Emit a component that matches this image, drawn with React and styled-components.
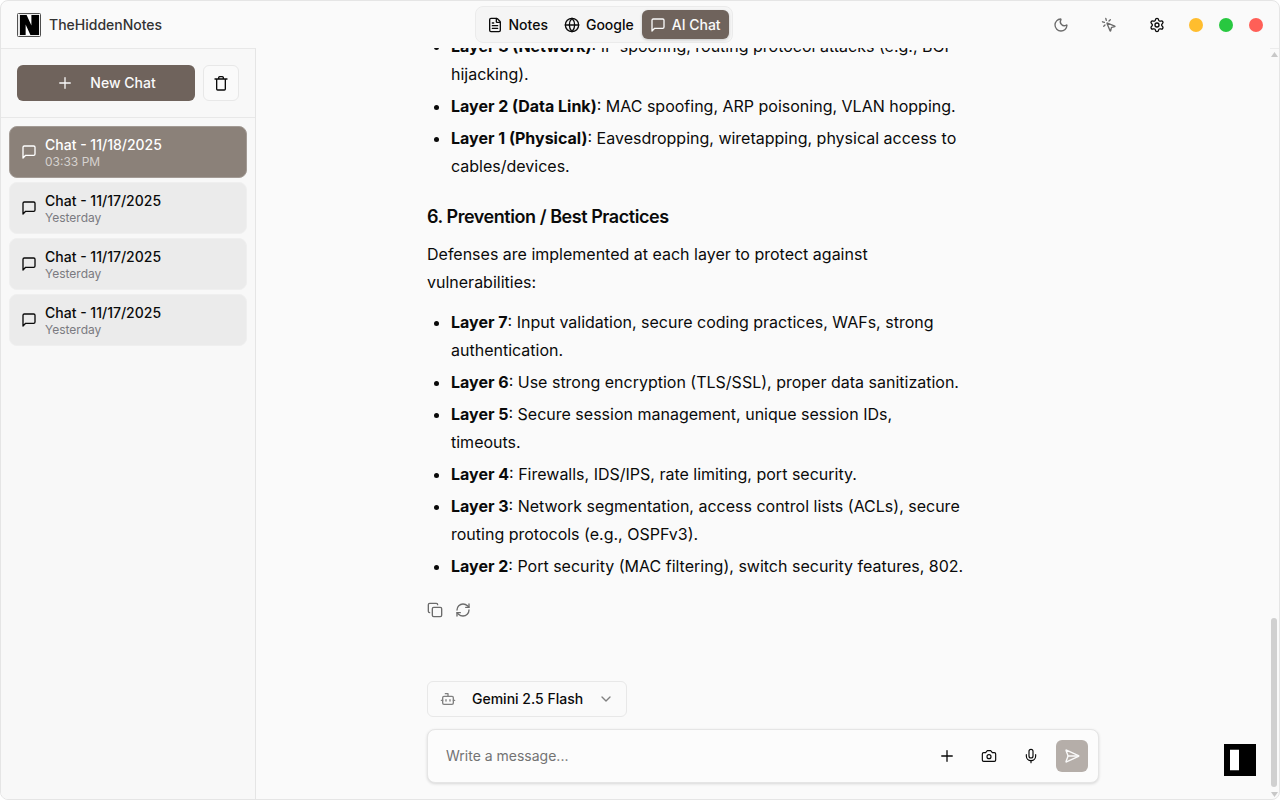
import React, { useState } from "react";
import styled, { createGlobalStyle } from "styled-components";
import {
  Bot,
  ChevronDown,
  Copy,
  FileText,
  Globe,
  Mic,
  Moon,
  MousePointerClick,
  Plus,
  RefreshCw,
  SendHorizontal,
  Settings
} from "lucide-react";

const GlobalStyle = createGlobalStyle`
  * {
    box-sizing: border-box;
  }
  body {
    margin: 0;
    background: #fff;
    color: #0a0a0a;
    font-family: Inter, "Liberation Sans", sans-serif;
    font-size: 14px;
    line-height: 20px;
  }
  button,
  input,
  select {
    font: inherit;
    color: inherit;
  }
  button {
    cursor: pointer;
  }
`;

const Window = styled.div`
  display: flex;
  flex-direction: column;
  height: 100vh;
  overflow: hidden;
  background: #fafafa;
  border: 1px solid #e5e5e5;
  border-radius: 8px;
`;

const Header = styled.header`
  display: flex;
  flex: none;
  align-items: center;
  justify-content: space-between;
  height: 47px;
  padding: 0 16px;
`;

const Brand = styled.div`
  display: flex;
  align-items: center;
  gap: 8px;
  color: #333;
  font-weight: 500;
`;

const Tabs = styled.nav`
  display: flex;
  padding: 3px;
  background: #f5f5f5;
  border: 1px solid #ebebeb;
  border-radius: 8px;
`;

const Tab = styled.button`
  display: flex;
  align-items: center;
  gap: 6px;
  height: 29px;
  padding: 0 8px;
  border: 0;
  border-radius: 6px;
  font-weight: 500;
  color: ${p => (p.$active ? "#fafafa" : "#0a0a0a")};
  background: ${p => (p.$active ? "#6f635c" : "transparent")};
  box-shadow: ${p => (p.$active ? "0 1px 3px rgba(0, 0, 0, 0.2)" : "none")};
`;

const HeaderActions = styled.div`
  display: flex;
  align-items: center;
  gap: 16px;
`;

const IconButton = styled.button`
  display: grid;
  place-items: center;
  width: ${p => p.$size}px;
  height: ${p => p.$size}px;
  padding: 0;
  border: 0;
  background: transparent;
  color: ${p => (p.$muted ? "#6b6b6b" : "#0a0a0a")};
`;

const Dot = styled.button`
  width: 14px;
  height: 14px;
  padding: 0;
  border: 0;
  border-radius: 50%;
  background: ${p => p.$color};
`;

const Body = styled.div`
  display: flex;
  flex: 1;
  min-height: 0;
`;

const Sidebar = styled.aside`
  flex: none;
  width: 255px;
  background: #f8f8f8;
  border-top: 1px solid #e8e8e8;
  border-right: 1px solid #e5e5e5;
`;

const SidebarTools = styled.div`
  display: flex;
  gap: 8px;
  padding: 16px;
  border-bottom: 1px solid #e8e8e8;
`;

const NewChat = styled.button`
  display: flex;
  flex: 1;
  align-items: center;
  justify-content: center;
  gap: 16px;
  height: 36px;
  border: 0;
  border-radius: 6px;
  background: #6f635c;
  color: #fafafa;
  font-weight: 500;
`;

const TrashButton = styled(IconButton)`
  background: #fafafa;
  border: 1px solid #e8e8e8;
  border-radius: 6px;
`;

const ChatList = styled.div`
  display: flex;
  flex-direction: column;
  gap: 4px;
  padding: 8px;
`;

const ChatItem = styled.button`
  display: flex;
  align-items: center;
  gap: 8px;
  height: 52px;
  padding: 0 11px;
  border: 1px solid ${p => (p.$active ? "#a39b95" : "#efefef")};
  border-radius: 8px;
  background: ${p => (p.$active ? "#8b8179" : "#ebebeb")};
  color: ${p => (p.$active ? "#fff" : "#0a0a0a")};
  text-align: left;
`;

const ChatTitle = styled.div`
  font-weight: 500;
  line-height: 19px;
`;

const ChatTime = styled.div`
  font-size: 12px;
  line-height: 16px;
  color: ${p => (p.$active ? "#d6d2cf" : "#7a7a80")};
`;

const Main = styled.main`
  display: flex;
  flex: 1;
  flex-direction: column;
  min-width: 0;
  padding-bottom: 16px;
`;

const Messages = styled.div`
  display: flex;
  flex: 1;
  flex-direction: column;
  justify-content: flex-end;
  width: 100%;
  max-width: 672px;
  min-height: 0;
  margin: 0 auto;
  overflow: hidden;
`;

const Message = styled.article`
  flex: none;
  width: 80%;
  font-size: 16px;
  line-height: 28px;

  h3 {
    margin: 23px 0 9px;
    font-size: 18px;
    font-weight: 600;
    letter-spacing: -0.025em;
  }
  p {
    margin: 0 0 12px;
  }
  ul {
    display: flex;
    flex-direction: column;
    gap: 4px;
    margin: 0;
    padding-left: 24px;
  }
  strong {
    font-weight: 700;
  }
`;

const MessageActions = styled.div`
  display: flex;
  flex: none;
  gap: 12px;
  padding: 22px 0 63px;
`;

const Composer = styled.form`
  display: flex;
  flex: none;
  flex-direction: column;
  align-items: flex-start;
  gap: 12px;
  width: 100%;
  max-width: 672px;
  margin: 0 auto;
`;

const ModelPicker = styled.label`
  position: relative;
  color: #808080;

  select {
    width: 200px;
    height: 36px;
    padding: 0 40px 0 44px;
    appearance: none;
    border: 1px solid #e8e8e8;
    border-radius: 6px;
    background: #fafafa;
    color: #0a0a0a;
    font-weight: 500;
  }
  svg {
    position: absolute;
    top: 10px;
    pointer-events: none;
  }
  svg:first-child {
    left: 13px;
  }
  svg:last-child {
    right: 13px;
  }
`;

const MessageBox = styled.div`
  display: flex;
  align-items: center;
  gap: 8px;
  width: 100%;
  height: 54px;
  padding: 0 10px 0 18px;
  border: 1px solid #e5e5e5;
  border-radius: 8px;
  background: #fcfcfc;
  box-shadow: 0 1px 3px rgba(0, 0, 0, 0.14);

  input {
    flex: 1;
    min-width: 0;
    padding: 0;
    border: 0;
    outline: 0;
    background: transparent;
  }
  input::placeholder {
    color: #737373;
    opacity: 1;
  }
`;

const SendButton = styled(IconButton)`
  border-radius: 6px;
  background: #b5aea9;
  color: #fafafa;
`;

const Scrollbar = styled.div`
  display: flex;
  flex: none;
  flex-direction: column;
  align-items: center;
  width: 9px;
  padding: 3px 1px 2px 0;
  border-top: 1px solid #ececec;
`;

const ScrollThumb = styled.div`
  width: 6px;
  height: 169px;
  margin: auto 0 5px;
  border-radius: 3px;
  background: #d0d0d0;
`;

const Badge = styled.svg`
  position: fixed;
  right: 24px;
  bottom: 24px;
`;

const chats = [
  { title: "Chat - 11/18/2025", time: "03:33 PM" },
  { title: "Chat - 11/17/2025", time: "Yesterday" },
  { title: "Chat - 11/17/2025", time: "Yesterday" },
  { title: "Chat - 11/17/2025", time: "Yesterday" }
];

const attacks = [
  ["Layer 3 (Network)", "IP spoofing, routing protocol attacks (e.g., BGP hijacking)."],
  ["Layer 2 (Data Link)", "MAC spoofing, ARP poisoning, VLAN hopping."],
  ["Layer 1 (Physical)", "Eavesdropping, wiretapping, physical access to cables/devices."]
];

const defenses = [
  ["Layer 7", "Input validation, secure coding practices, WAFs, strong authentication."],
  ["Layer 6", "Use strong encryption (TLS/SSL), proper data sanitization."],
  ["Layer 5", "Secure session management, unique session IDs, timeouts."],
  ["Layer 4", "Firewalls, IDS/IPS, rate limiting, port security."],
  ["Layer 3", "Network segmentation, access control lists (ACLs), secure routing protocols (e.g., OSPFv3)."],
  ["Layer 2", "Port security (MAC filtering), switch security features, 802."]
];

const LineIcon = ({ weight = 2, children }) => (
  <svg
    width="16"
    height="16"
    viewBox="0 0 24 24"
    fill="none"
    stroke="currentColor"
    strokeWidth={weight}
    strokeLinecap="round"
    strokeLinejoin="round"
  >
    {children}
  </svg>
);

const ChatIcon = () => (
  <LineIcon>
    <path d="M21 15a2 2 0 0 1-2 2H7l-4 4V5a2 2 0 0 1 2-2h14a2 2 0 0 1 2 2z" />
  </LineIcon>
);

const CameraIcon = () => (
  <LineIcon weight={1.75}>
    <path d="M14.5 4h-5L7 7H4a2 2 0 0 0-2 2v9a2 2 0 0 0 2 2h16a2 2 0 0 0 2-2V9a2 2 0 0 0-2-2h-3z" />
    <circle cx="12" cy="13" r="3" />
  </LineIcon>
);

const TrashIcon = () => (
  <LineIcon>
    <path d="M3 6h18M5.5 6v15a1.5 1.5 0 0 0 1.5 1.5h10a1.5 1.5 0 0 0 1.5-1.5V6M8.5 6V4a1.5 1.5 0 0 1 1.5-1.5h4a1.5 1.5 0 0 1 1.5 1.5v2" />
  </LineIcon>
);

const Logo = () => (
  <svg width="24" height="24" viewBox="0 0 25 25">
    <rect x="0.5" y="0.5" width="24" height="24" rx="1" fill="#fff" stroke="#444" />
    <rect x="2" y="2" width="21" height="21" fill="#000" />
    <path d="M10 2h5v11zM9 12l5 11H9z" fill="#fff" />
    <path d="M2 2h1v21H2z" fill="#fff" />
  </svg>
);

const LayerList = ({ items }) => (
  <ul>
    {items.map(([name, text]) => (
      <li key={name}>
        <strong>{name}</strong>: {text}
      </li>
    ))}
  </ul>
);

const App = () => {
  const [tab, setTab] = useState("AI Chat");
  const [selected, setSelected] = useState(0);
  const [message, setMessage] = useState("");

  const tabs = [
    { name: "Notes", icon: <FileText size={16} /> },
    { name: "Google", icon: <Globe size={16} /> },
    { name: "AI Chat", icon: <ChatIcon /> }
  ];

  return (
    <>
      <GlobalStyle />
      <Window>
        <Header>
          <Brand>
            <Logo />
            TheHiddenNotes
          </Brand>
          <Tabs>
            {tabs.map(({ name, icon }) => (
              <Tab key={name} $active={tab === name} onClick={() => setTab(name)}>
                {icon}
                {name}
              </Tab>
            ))}
          </Tabs>
          <HeaderActions>
            <IconButton $size={32} $muted aria-label="Dark mode">
              <Moon size={16} />
            </IconButton>
            <IconButton $size={32} $muted aria-label="Pointer">
              <MousePointerClick size={16} />
            </IconButton>
            <IconButton $size={32} aria-label="Settings">
              <Settings size={16} />
            </IconButton>
            <Dot $color="#ffbd2e" aria-label="Minimize" />
            <Dot $color="#28c840" aria-label="Maximize" />
            <Dot $color="#ff5f57" aria-label="Close" />
          </HeaderActions>
        </Header>
        <Body>
          <Sidebar>
            <SidebarTools>
              <NewChat>
                <Plus size={18} strokeWidth={1.75} />
                New Chat
              </NewChat>
              <TrashButton $size={36} aria-label="Delete chats">
                <TrashIcon />
              </TrashButton>
            </SidebarTools>
            <ChatList>
              {chats.map((chat, index) => (
                <ChatItem
                  key={index}
                  $active={selected === index}
                  onClick={() => setSelected(index)}
                >
                  <ChatIcon />
                  <div>
                    <ChatTitle>{chat.title}</ChatTitle>
                    <ChatTime $active={selected === index}>{chat.time}</ChatTime>
                  </div>
                </ChatItem>
              ))}
            </ChatList>
          </Sidebar>
          <Main>
            <Messages>
              <Message>
                <LayerList items={attacks} />
                <h3>6. Prevention / Best Practices</h3>
                <p>
                  Defenses are implemented at each layer to protect against
                  vulnerabilities:
                </p>
                <LayerList items={defenses} />
              </Message>
              <MessageActions>
                <IconButton $size={16} $muted aria-label="Copy">
                  <Copy size={16} />
                </IconButton>
                <IconButton $size={16} $muted aria-label="Regenerate">
                  <RefreshCw size={16} />
                </IconButton>
              </MessageActions>
            </Messages>
            <Composer onSubmit={e => e.preventDefault()}>
              <ModelPicker>
                <Bot size={16} />
                <select aria-label="Model">
                  <option>Gemini 2.5 Flash</option>
                </select>
                <ChevronDown size={16} />
              </ModelPicker>
              <MessageBox>
                <input
                  aria-label="Message"
                  placeholder="Write a message..."
                  value={message}
                  onChange={e => setMessage(e.target.value)}
                />
                <IconButton $size={34} type="button" aria-label="Attach">
                  <Plus size={18} strokeWidth={1.75} />
                </IconButton>
                <IconButton $size={34} type="button" aria-label="Camera">
                  <CameraIcon />
                </IconButton>
                <IconButton $size={34} type="button" aria-label="Dictate">
                  <Mic size={16} strokeWidth={1.75} />
                </IconButton>
                <SendButton $size={32} type="submit" aria-label="Send">
                  <SendHorizontal size={16} />
                </SendButton>
              </MessageBox>
            </Composer>
          </Main>
          <Scrollbar>
            <svg width="7" height="5" viewBox="0 0 7 5" fill="#c8c8c8">
              <path d="M3.5 0L7 5H0z" />
            </svg>
            <ScrollThumb />
            <svg width="7" height="5" viewBox="0 0 7 5" fill="#c8c8c8">
              <path d="M0 0h7L3.5 5z" />
            </svg>
          </Scrollbar>
        </Body>
      </Window>
      <Badge width="32" height="32" viewBox="0 0 32 32">
        <rect width="32" height="32" fill="#000" />
        <rect x="6" y="5" width="9" height="22" fill="#444" />
        <rect x="6" y="6" width="9" height="20" fill="#fff" />
      </Badge>
    </>
  );
};

export default App;
